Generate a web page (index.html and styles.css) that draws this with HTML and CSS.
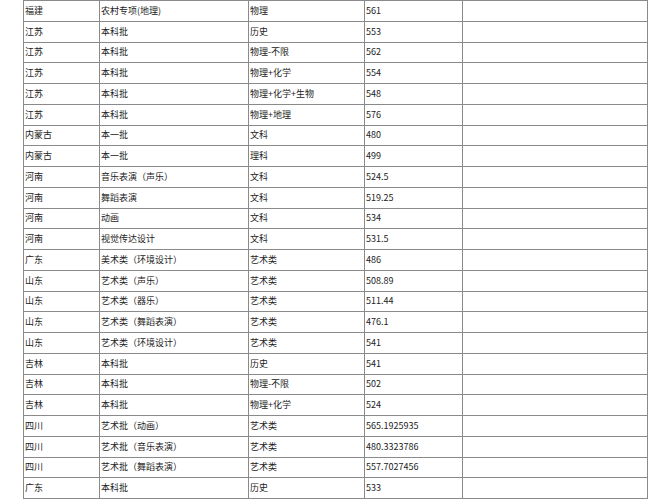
FILE: index.html
```html
<!DOCTYPE html>
<html lang="zh">
<head>
<meta charset="utf-8">
<link rel="stylesheet" href="styles.css">
</head>
<body>
<table class="scores">
<colgroup><col class="c1"><col class="c2"><col class="c3"><col class="c4"><col class="c5"></colgroup>
<tbody>
<tr><td>福建</td><td>农村专项(地理)</td><td>物理</td><td>561</td><td></td></tr>
<tr><td>江苏</td><td>本科批</td><td>历史</td><td>553</td><td></td></tr>
<tr><td>江苏</td><td>本科批</td><td>物理-不限</td><td>562</td><td></td></tr>
<tr><td>江苏</td><td>本科批</td><td>物理+化学</td><td>554</td><td></td></tr>
<tr><td>江苏</td><td>本科批</td><td>物理+化学+生物</td><td>548</td><td></td></tr>
<tr><td>江苏</td><td>本科批</td><td>物理+地理</td><td>576</td><td></td></tr>
<tr><td>内蒙古</td><td>本一批</td><td>文科</td><td>480</td><td></td></tr>
<tr><td>内蒙古</td><td>本一批</td><td>理科</td><td>499</td><td></td></tr>
<tr><td>河南</td><td>音乐表演（声乐）</td><td>文科</td><td>524.5</td><td></td></tr>
<tr><td>河南</td><td>舞蹈表演</td><td>文科</td><td>519.25</td><td></td></tr>
<tr><td>河南</td><td>动画</td><td>文科</td><td>534</td><td></td></tr>
<tr><td>河南</td><td>视觉传达设计</td><td>文科</td><td>531.5</td><td></td></tr>
<tr><td>广东</td><td>美术类（环境设计）</td><td>艺术类</td><td>486</td><td></td></tr>
<tr><td>山东</td><td>艺术类（声乐）</td><td>艺术类</td><td>508.89</td><td></td></tr>
<tr><td>山东</td><td>艺术类（器乐）</td><td>艺术类</td><td>511.44</td><td></td></tr>
<tr><td>山东</td><td>艺术类（舞蹈表演）</td><td>艺术类</td><td>476.1</td><td></td></tr>
<tr><td>山东</td><td>艺术类（环境设计）</td><td>艺术类</td><td>541</td><td></td></tr>
<tr><td>吉林</td><td>本科批</td><td>历史</td><td>541</td><td></td></tr>
<tr><td>吉林</td><td>本科批</td><td>物理-不限</td><td>502</td><td></td></tr>
<tr><td>吉林</td><td>本科批</td><td>物理+化学</td><td>524</td><td></td></tr>
<tr><td>四川</td><td>艺术批（动画）</td><td>艺术类</td><td>565.1925935</td><td></td></tr>
<tr><td>四川</td><td>艺术批（音乐表演）</td><td>艺术类</td><td>480.3323786</td><td></td></tr>
<tr><td>四川</td><td>艺术批（舞蹈表演）</td><td>艺术类</td><td>557.7027456</td><td></td></tr>
<tr><td>广东</td><td>本科批</td><td>历史</td><td>533</td><td></td></tr>
</tbody>
</table>
</body>
</html>
```

FILE: styles.css
```css
html, body {
  margin: 0;
  padding: 0;
  background: #ffffff;
}
.scores {
  margin-left: 23px;
  border-collapse: collapse;
  table-layout: fixed;
  width: 624px;
  font-family: "Noto Sans CJK SC", "Noto Sans", sans-serif;
  font-size: 9px;
  color: #222;
}
.c1 { width: 76px; }
.c2 { width: 149px; }
.c3 { width: 116px; }
.c4 { width: 98px; }
.c5 { width: 185px; }
.scores td {
  border: 1px solid #8a8a8a;
  height: 19.75px;
  padding: 0 1px;
  line-height: 12px;
  vertical-align: middle;
  white-space: nowrap;
  overflow: hidden;
}
```
